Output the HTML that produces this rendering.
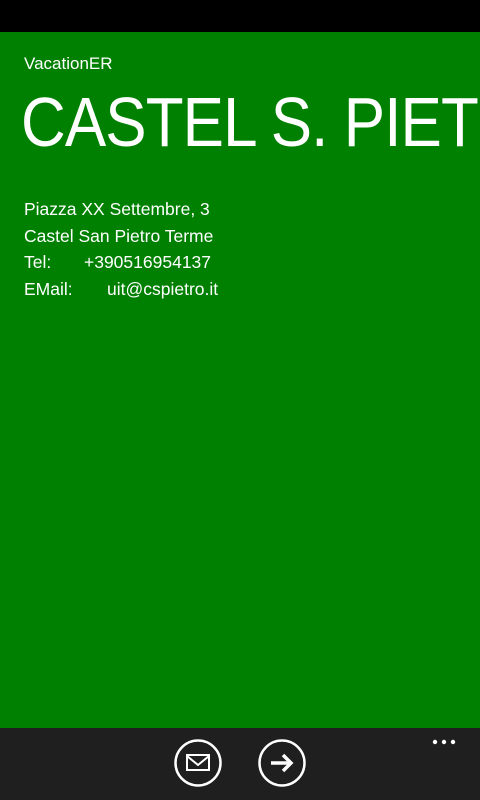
<!DOCTYPE html>
<html><head><style>
body{margin:0;width:480px;height:800px;overflow:hidden;background:#008000;font-family:"Liberation Sans",sans-serif;color:#fff;position:relative}
.top{position:absolute;left:0;top:0;width:480px;height:32px;background:#000}
.app{position:absolute;left:24px;top:54px;font-size:17px}
.tw{position:absolute;left:0;top:80px;width:480px;height:90px;overflow:hidden}
.title{position:absolute;left:21px;top:2px;font-size:70px;white-space:nowrap;letter-spacing:-1px;transform:scaleX(0.885);transform-origin:left}
.info{position:absolute;left:24px;top:196px;font-size:17.5px;line-height:26.6px}
.bar{position:absolute;left:0;top:728px;width:480px;height:72px;background:#1f1f1f}
</style></head><body>
<div class="top"></div>
<div class="app">VacationER</div>
<div class="tw"><div class="title">CASTEL S. PIETRO</div></div>
<div class="info">
<div>Piazza XX Settembre, 3</div>
<div>Castel San Pietro Terme</div>
<div><span style="display:inline-block;width:60px">Tel:</span>+390516954137</div>
<div><span style="display:inline-block;width:83px">EMail:</span>uit@cspietro.it</div>
</div>
<div class="bar">
<svg width="480" height="72" style="position:absolute;left:0;top:0">
<g fill="none" stroke="#fff" stroke-width="2.5">
<circle cx="198" cy="35" r="22.5"/>
<rect x="187" y="27" width="22" height="15" stroke-width="2"/>
<path d="M187 28 L198 37 L209 28" stroke-width="2"/>
<circle cx="282" cy="35" r="22.5"/>
<path d="M271 35 H290 M283 27 L291 35 L283 43" stroke-width="3.5"/>
</g>
<g fill="#fff"><circle cx="435" cy="14" r="2.2"/><circle cx="444" cy="14" r="2.2"/><circle cx="453" cy="14" r="2.2"/></g>
</svg>
</div>
</body></html>
